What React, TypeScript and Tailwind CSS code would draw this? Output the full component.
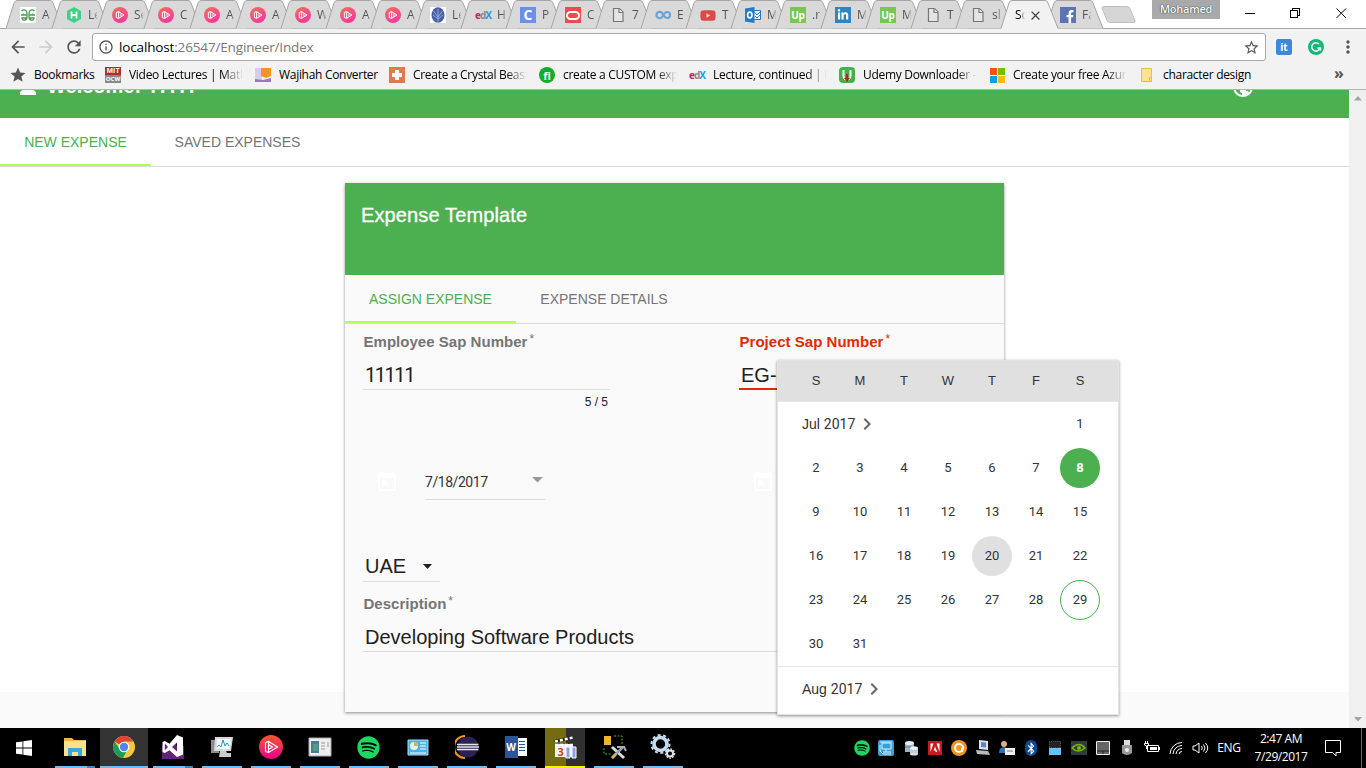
import React from 'react';
import { FaYoutube, FaSpotify, FaLinkedinIn, FaFacebookF, FaBluetoothB } from 'react-icons/fa';
import { MdRefresh, MdArrowBack, MdArrowForward, MdInfoOutline, MdStar, MdStarBorder, MdClose, MdMoreVert, MdPerson, MdPublic, MdToday, MdChevronRight } from 'react-icons/md';

const SEGOE = "font-['Open_Sans',sans-serif]";

/* ---------- favicons ---------- */

function PlayBadge() {
  return (
    <svg width="16" height="16" viewBox="0 0 24 24">
      <defs>
        <linearGradient id="pl" x1="0" y1="0" x2="0.5" y2="1">
          <stop offset="0" stopColor="#f0705a" />
          <stop offset="1" stopColor="#f23c9c" />
        </linearGradient>
      </defs>
      <circle cx="12" cy="12" r="12" fill="url(#pl)" />
      <path d="M10 7v10l8-5zM6.500 8v8M10 7L6.500 8M10 17l-3.500-1M13.500 9.500v5" fill="none" stroke="#fff" strokeWidth="1.500" />
    </svg>
  );
}

function Square({ className, children }: { className: string; children?: React.ReactNode }) {
  return <div className={`flex h-4 w-4 shrink-0 items-center justify-center overflow-hidden leading-none ${className}`}>{children}</div>;
}

function PageIcon() {
  return (
    <svg width="16" height="16" viewBox="0 0 16 16" fill="#e4e4e4" stroke="#777" strokeWidth="1.2">
      <path d="M3.500 1.500h6l3.500 3.500v9.500h-9.500z" />
      <path d="M9 1.500v4h4" />
    </svg>
  );
}

function Edx() {
  return (
    <div className="flex h-4 w-4 items-center justify-center font-['Open_Sans',sans-serif] text-[10px] font-bold leading-none tracking-[-1px]">
      <span className="text-[#b52a67]">e</span>
      <span className="text-[#888]">d</span>
      <span className="text-[#1e9be0]">X</span>
    </div>
  );
}

function Leaf() {
  return (
    <svg width="16" height="16" viewBox="0 0 16 16">
      <rect width="16" height="16" fill="#fff" />
      <g fill="none" stroke="#4a9c55" strokeWidth="1.300">
        <path d="M1.500 4c2-2 5.500-1 5.500 2v4c0 4-5 4-5 1h5M1 8h6M3 6.500c0 2 3 2 4 1" />
        <path d="M14.500 4c-2-2-5.500-1-5.500 2v4c0 4 5 4 5 1H9M15 8H9M13 6.500c0 2-3 2-4 1" />
      </g>
    </svg>
  );
}

function Hexagon() {
  return (
    <svg width="16" height="16" viewBox="0 0 16 16">
      <path d="M8 0l7 4v8l-7 4-7-4V4z" fill="#42cf85" />
      <path d="M5.500 4.500v7M10.500 4.500v7M5.500 8h5" stroke="#fff" strokeWidth="1.800" />
    </svg>
  );
}

function BlueTree() {
  return (
    <svg width="16" height="16" viewBox="0 0 16 16">
      <rect width="16" height="16" fill="#fff" />
      <ellipse cx="8" cy="8" rx="6.500" ry="7.700" fill="#4b5fa8" />
      <path d="M8 15V8M8 10L3.500 4M8 10l4.500-6M8 12L3 8M8 12l5-4M8 8V2" stroke="#9fc0e6" strokeWidth=".8" fill="none" />
    </svg>
  );
}

function Loops() {
  return (
    <svg width="16" height="16" viewBox="0 0 16 16" fill="none" stroke="#6aa3d6" strokeWidth="2.200">
      <path d="M7 10.200A3.200 3.200 0 1 1 7 5.800L9.500 9.500A3 3 0 1 0 9.500 6.500L7 10.200" />
    </svg>
  );
}

function Outlook() {
  return (
    <svg width="16" height="16" viewBox="0 0 16 16">
      <path d="M8 3.500h7.500v9H8z" fill="#fff" stroke="#1f78c4" />
      <path d="M9 5l3 3 3.500-3.500M10 9l2 2 3-3" stroke="#1f78c4" fill="none" />
      <path d="M0 1.500L9.500 0v16L0 14.500z" fill="#1f7cc8" />
      <ellipse cx="4.800" cy="8" rx="2.200" ry="2.900" fill="none" stroke="#fff" strokeWidth="1.600" />
    </svg>
  );
}

const up = <Square className="bg-[#78c751] text-[10px] font-bold text-white tracking-[-0.3px] font-['Open_Sans',sans-serif]">Up</Square>;

const tabs: { icon: React.ReactNode; text: string }[] = [
  { icon: <Leaf />, text: 'A' },
  { icon: <Hexagon />, text: 'Le' },
  { icon: <PlayBadge />, text: 'Se' },
  { icon: <PlayBadge />, text: 'C' },
  { icon: <PlayBadge />, text: 'A' },
  { icon: <PlayBadge />, text: 'A' },
  { icon: <PlayBadge />, text: 'W' },
  { icon: <PlayBadge />, text: 'A' },
  { icon: <PlayBadge />, text: 'A' },
  { icon: <BlueTree />, text: 'Le' },
  { icon: <Edx />, text: 'H' },
  { icon: <Square className="bg-[#6c8fe8] text-[14px] font-bold text-white">C</Square>, text: 'P' },
  {
    icon: (
      <Square className="bg-[#f0484c]">
        <div className="h-[9px] w-[14px] rounded-full border-2 border-white" />
      </Square>
    ),
    text: 'C',
  },
  { icon: <PageIcon />, text: '7' },
  { icon: <Loops />, text: 'E' },
  { icon: <FaYoutube size={17} color="#dc4a47" />, text: 'T' },
  { icon: <Outlook />, text: 'M' },
  { icon: up, text: '.r' },
  { icon: <Square className="bg-[#2f86bd] text-white"><FaLinkedinIn size={12} /></Square>, text: 'M' },
  { icon: up, text: 'M' },
  { icon: <PageIcon />, text: 'T' },
  { icon: <PageIcon />, text: 'sl' },
  { icon: null, text: 'Sc' },
  { icon: <Square className="items-end bg-[#5c75b0] pl-1 text-white"><FaFacebookF size={13} /></Square>, text: 'Fa' },
];

function Tab({ icon, text, wide }: { icon: React.ReactNode; text: string; wide: boolean }) {
  const active = icon === null;
  return (
    <div className={`relative h-[29px] shrink-0 ${wide ? 'w-[46px]' : 'w-[45px]'} ${active ? 'z-10' : ''}`}>
      <svg className="absolute left-0 top-0 overflow-visible" width="58" height="29" viewBox="0 0 58 29">
        <path
          d="M0 28.500L8 3Q9 .5 11 .5H44Q46 .5 47 3L57 28.500"
          fill={active ? '#f2f2f2' : '#d9d9d9'}
          stroke="#a6a6a6"
        />
        {active && <path d="M0.500 28.500H56.500" stroke="#f2f2f2" />}
      </svg>
      <div className="relative flex h-[29px] items-center pl-[14px] pt-[1px]">
        {active ? (
          <>
            <span className="w-[10px] overflow-hidden text-[12px] text-black [mask-image:linear-gradient(to_right,#000_50%,transparent)]">{text}</span>
            <MdClose className="ml-[3px] shrink-0" size={15} color="#444" />
          </>
        ) : (
          <>
            <span className="flex w-4 shrink-0">{icon}</span>
            <span className="ml-[6px] w-[9px] shrink-0 overflow-hidden whitespace-nowrap text-[12px] text-[#555] [mask-image:linear-gradient(to_right,#000_55%,rgba(0,0,0,0.3))]">{text}</span>
          </>
        )}
      </div>
    </div>
  );
}

function TabStrip() {
  return (
    <div className="relative flex h-[29px] w-full border-b border-[#a6a6a6] bg-white pl-[6px]">
      {tabs.map((t, i) => (
        <Tab key={i} wide={i < 5} {...t} />
      ))}
      <svg className="ml-[10px] mt-[6px] shrink-0" width="35" height="18" viewBox="0 0 35 18">
        <path d="M3 .5H26Q28 .5 29 2.500L34 15Q34.500 16.500 33 16.500H9Q7 16.500 6 14.500L1 2Q.5 .5 3 .5Z" fill="#d6d6d6" stroke="#c0c0c0" />
      </svg>
      <div className="ml-[16px] flex h-[19px] w-[68px] shrink-0 items-center justify-center bg-[#a9a9a9] text-[11px] font-semibold tracking-[-0.25px] text-white [text-shadow:0_0_1px_#333,0_0_1px_#333]">
        Mohamed
      </div>
      <svg className="absolute left-[1240px] top-[4px]" width="110" height="18" viewBox="0 0 110 18" fill="none" stroke="#000" shapeRendering="crispEdges">
        <path d="M5 9.500h10M50.500 6.500h7v7h-7zM52.500 6v-2h7v7h-2" />
        <path d="M96.500 4.500l9.500 9.500M106 4.500l-9.500 9.500" shapeRendering="auto" />
      </svg>
    </div>
  );
}

function Toolbar() {
  return (
    <div className="flex h-[36px] items-center">
      <MdArrowBack className="ml-[8px]" size={20} color="#555" />
      <MdArrowForward className="ml-[8px]" size={20} color="#ccc" />
      <MdRefresh className="ml-[8px]" size={20} color="#555" />
      <div className="ml-[8px] flex h-[28px] w-[1174px] items-center rounded-[3px] border border-[#a9a9a9] bg-white">
        <MdInfoOutline className="ml-[5px]" size={16} color="#555" />
        <span className="ml-[5px] flex-1 pt-px text-[13.500px] leading-none tracking-[-0.15px] text-[#777]">
          <span className="text-black">localhost</span>:26547/Engineer/Index
        </span>
        <MdStarBorder className="mr-[5px]" size={17} color="#555" />
      </div>
      <Square className="ml-[10px] rounded-[2px] bg-[#3d88d8] text-[10px] font-bold text-white">it</Square>
      <svg className="ml-[16px]" width="16" height="16" viewBox="0 0 16 16">
        <circle cx="8" cy="8" r="8" fill="#15b876" />
        <path d="M11 5a4.200 4.200 0 1 0 1 4H9.500M12.500 8.500v3" fill="none" stroke="#fff" strokeWidth="1.500" />
      </svg>
      <MdMoreVert className="ml-[14px]" size={20} color="#555" />
    </div>
  );
}

function Bookmark({ w, icon, text, fade }: { w: string; icon: React.ReactNode; text: string; fade?: boolean }) {
  return (
    <div className={`flex h-full shrink-0 items-center ${w}`}>
      <span className="flex w-4 shrink-0 justify-center">{icon}</span>
      <span
        className={`ml-[8px] overflow-hidden whitespace-nowrap text-[12px] tracking-[-0.3px] text-black ${
          fade ? 'w-[114px] [mask-image:linear-gradient(to_right,#000_82%,transparent)]' : ''
        }`}
      >
        {text}
      </span>
    </div>
  );
}

function Bookmarks() {
  return (
    <div className="flex h-[25px] items-center border-b border-[#b3b3b3] pb-[4px] pl-[10px]">
      <Bookmark w="w-[95px]" icon={<MdStar size={18} color="#555" className="shrink-0" />} text="Bookmarks" />
      <Bookmark
        w="w-[150px]"
        fade
        text="Video Lectures | Mathe"
        icon={
          <span className="flex h-4 w-4 flex-col overflow-hidden text-center text-[7px] font-bold leading-[8px] text-white">
            <span className="bg-[#b02a30]">MIT</span>
            <span className="bg-[#888] text-[6px]">OCW</span>
          </span>
        }
      />
      <Bookmark
        w="w-[134px]"
        text="Wajihah Converter"
        icon={
          <svg width="16" height="16" viewBox="0 0 16 16">
            <path d="M0 1h7v14H0z" fill="#d9cde6" />
            <path d="M6 1h10v8l-5 2-5-2z" fill="#f7941d" />
            <path d="M0 12l8 1 8-2v4H0z" fill="#9c7ab8" />
          </svg>
        }
      />
      <Bookmark
        w="w-[150px]"
        fade
        text="Create a Crystal Beast"
        icon={
          <Square className="bg-[#e2784c]">
            <svg width="10" height="10" viewBox="0 0 10 10">
              <path d="M3 0h4v3h3v4H7v3H3V7H0V3h3z" fill="#fff" />
            </svg>
          </Square>
        }
      />
      <Bookmark w="w-[150px]" fade text="create a CUSTOM expe" icon={<Square className="rounded-full bg-[#12ad2b] text-[11px] font-bold text-white">fi</Square>} />
      <Bookmark w="w-[150px]" fade text="Lecture, continued | Le" icon={<Edx />} />
      <Bookmark
        w="w-[150px]"
        fade
        text="Udemy Downloader - "
        icon={
          <svg width="16" height="16" viewBox="0 0 16 16">
            <rect width="16" height="16" rx="4" fill="#45b04a" />
            <path d="M4.500 3v6a3.500 3.500 0 0 0 7 0V3" fill="none" stroke="#fff" strokeWidth="2" />
            <path d="M7 7h2v4h2l-3 4-3-4h2z" fill="#b3241c" />
          </svg>
        }
      />
      <Bookmark
        w="w-[150px]"
        fade
        text="Create your free Azure"
        icon={
          <span className="grid grid-cols-2 gap-[1px]">
            <i className="h-[7px] w-[7px] bg-[#f65314]" />
            <i className="h-[7px] w-[7px] bg-[#7cbb00]" />
            <i className="h-[7px] w-[7px] bg-[#00a1f1]" />
            <i className="h-[7px] w-[7px] bg-[#ffbb00]" />
          </span>
        }
      />
      <Bookmark
        w="w-[195px]"
        text="character design"
        icon={
          <svg width="16" height="16" viewBox="0 0 16 16" fill="#fde293" stroke="#e8be4a">
            <path d="M2.500 1.500h10v13h-10zM10.500 10.500h2v4h-2z" />
          </svg>
        }
      />
      <span className="-mt-[4px] text-[16px] font-bold leading-none text-[#555]">»</span>
    </div>
  );
}

/* ---------- page ---------- */

const DIGITS = "font-[Roboto,sans-serif]";

function FieldLabel({ children, error }: { children: string; error?: boolean }) {
  return (
    <div className={`-mt-px flex h-[20px] items-center pl-[0.500px] text-[15px] font-bold leading-none tracking-[0.03px] ${error ? 'text-[#dd2c00]' : 'text-[#757575]'}`}>
      {children}
      <span className="ml-[2px] self-start pt-[2px] text-[12px] font-normal">*</span>
    </div>
  );
}

const DAYS = ['S', 'M', 'T', 'W', 'T', 'F', 'S'];

function MonthName({ month, year }: { month: string; year: string }) {
  return (
    <div className="flex items-center text-[14px] leading-none text-[#333]">
      <span>
        {month} <span className={DIGITS}>{year}</span>
      </span>
      <MdChevronRight size={24} color="#666" />
    </div>
  );
}

function Calendar() {
  const dates = Array.from({ length: 30 }, (_, i) => i + 2);
  return (
    <div className="absolute left-[777px] top-[270px] h-[355px] w-[342px] border border-[#e4e4e4] bg-white text-[13px] text-[#333] shadow-[0_1px_3px_rgba(0,0,0,0.4)]">
      <div className="grid h-[41px] grid-cols-[repeat(7,44px)] items-center border-b border-[#e8e8e8] bg-[#e0e0e0] pl-4 text-center">
        {DAYS.map((d, i) => (
          <span key={i} className="pb-[1px]">{d}</span>
        ))}
      </div>
      <div className="grid h-[265px] grid-cols-[repeat(7,44px)] grid-rows-[repeat(6,44px)] border-b border-[#e8e8e8] pl-4">
        <div className="col-span-6 flex items-center pl-[8px]">
          <MonthName month="Jul" year="2017" />
        </div>
        <div className={`flex items-center justify-center ${DIGITS}`}>1</div>
        {dates.map((d) => (
          <div key={d} className={`flex items-center justify-center ${DIGITS}`}>
            <span
              className={`flex h-[40px] w-[40px] items-center justify-center rounded-full ${
                d === 8 ? 'bg-[#4caf50] font-bold text-white' : d === 20 ? 'bg-[#e0e0e0]' : d === 29 ? 'border border-[#4caf50]' : ''
              }`}
            >
              {d}
            </span>
          </div>
        ))}
      </div>
      <div className="flex h-[44px] items-center pl-[24px]">
        <MonthName month="Aug" year="2017" />
      </div>
    </div>
  );
}

function Card() {
  return (
    <div className="ml-[345px] mt-[16px] h-[529px] w-[659px] bg-[#fafafa] shadow-[0_1px_3px_rgba(0,0,0,0.45)]">
      <div className="h-[92px] bg-[#4caf50] px-4 pt-[20px] text-[20px] leading-[24px] tracking-[0.13px] text-white [-webkit-text-stroke:0.3px_#fff]">Expense Template</div>
      <div className="flex h-[49px] border-b border-[#dcdcdc] text-[14px]">
        <div className="flex w-[171px] items-center justify-center border-b-2 border-[#b2ff59] pt-[2px] text-[#4caf50]">ASSIGN EXPENSE</div>
        <div className="flex w-[176px] items-center justify-center text-[#757575]">EXPENSE DETAILS</div>
      </div>
      <div className="flex pl-[18px] pt-[8px]">
        <div className="w-[376px]">
          <FieldLabel>Employee Sap Number</FieldLabel>
          <div className={`mt-[9px] flex h-[30px] w-[247px] items-center border-b border-[#dcdcdc] pl-[2px] text-[20px] tracking-[-1.450px] text-[#212121] ${DIGITS}`}>11111</div>
          <div className="mt-[5px] w-[245px] text-right text-[12px] leading-[14px] text-[#212121]">5 / 5</div>
        </div>
        <div className="w-[247px]">
          <FieldLabel error>Project Sap Number</FieldLabel>
          <div className="mt-[9px] flex h-[30px] items-center border-b-2 border-[#dd2c00] pl-[2px] pt-[2px] text-[20px] text-[#212121]">EG-</div>
        </div>
      </div>
      <div className="flex pl-[18px] pt-[56px]">
        <div className="flex w-[376px] items-start pl-[12px]">
          <MdToday size={24} color="#fff" className="mt-[5px]" />
          <div className="ml-[26px] flex h-[35px] w-[120px] items-center justify-between border-b border-[#dcdcdc] text-[14px] text-[#333]">
            <span className={`${DIGITS} tracking-[-0.45px]`}>7/18/2017</span>
            <svg width="16" height="8" viewBox="0 0 16 8" className="mb-[4px]">
              <path d="M3 1h11l-5.500 5.500z" fill="#999" />
            </svg>
          </div>
        </div>
        <MdToday size={24} color="#fff" className="ml-[12px] mt-[5px]" />
      </div>
      <div className="ml-[18px] mt-[50px] flex h-[32px] w-[77px] items-center justify-between border-b border-[#dcdcdc] pl-[2px] pt-px text-[20px] text-[#212121]">
        UAE
        <svg width="9" height="5" viewBox="0 0 9 5" className="mr-[8px]">
          <path d="M0 0h9L4.500 5z" fill="#212121" />
        </svg>
      </div>
      <div className="pl-[18px] pt-[12px]">
        <FieldLabel>Description</FieldLabel>
        <div className="mt-[9px] flex h-[30px] w-[623px] items-center border-b border-[#dcdcdc] pl-[2px] text-[20px] text-[#212121]">Developing Software Products</div>
      </div>
    </div>
  );
}

function Page() {
  return (
    <div className="relative flex h-[638px] overflow-hidden bg-[#fafafa] font-['Liberation_Sans',Arial,sans-serif]">
      <div className="h-[602px] w-[1349px] bg-white">
        <div className="flex h-[28px] items-start bg-[#4caf50] text-white">
          <MdPerson size={24} className="-mt-[15px] ml-[16px]" />
          <span className="-mt-[15px] ml-[7px] flex-1 text-[20px] font-bold leading-[22px]">
            Welcome! <span className={`${DIGITS} tracking-[-1.800px]`}>11111</span>
          </span>
          <MdPublic size={24} className="-mt-[15px] mr-[94px]" />
        </div>
        <div className="flex h-[49px] border-b border-[#dcdcdc] text-[14px]">
          <div className="flex w-[151px] items-center justify-center border-b-2 border-[#b2ff59] pt-[2px] text-[#4caf50]">NEW EXPENSE</div>
          <div className="flex w-[173px] items-center justify-center text-[#757575]">SAVED EXPENSES</div>
        </div>
        <Card />
      </div>
      <div className="flex h-full w-[17px] flex-col items-center justify-between bg-[#f0f0f0] py-[6px]">
        <svg width="8" height="5" viewBox="0 0 8 5"><path d="M0 4.500L4 0l4 4.500z" fill="#a3a3a3" /></svg>
        <svg width="8" height="5" viewBox="0 0 8 5"><path d="M0 0h8L4 4.500z" fill="#a3a3a3" /></svg>
      </div>
      <Calendar />
    </div>
  );
}

/* ---------- taskbar ---------- */

const STACKED = 'bg-[linear-gradient(to_right,#76b9ed_80%,#4f7fa6_80%)]';

const apps: { icon: React.ReactNode; cell?: string; bar?: string }[] = [
  {
    bar: STACKED,
    icon: (
      <svg width="24" height="24" viewBox="0 0 24 24">
        <path d="M1 3h8l2 2h12v16H1z" fill="#e9b94c" />
        <path d="M1 6h22v15H1z" fill="#fde08a" />
        <path d="M5 21v-8h14v8h-4v-4H9v4z" fill="#38a9e0" />
      </svg>
    ),
  },
  {
    cell: 'bg-[#333] ml-px !w-[48px]',
    icon: (
      <svg width="24" height="24" viewBox="0 0 24 24">
        <circle cx="12" cy="12" r="11" fill="#f8c93e" />
        <path d="M12 12L2.500 6.500A11 11 0 0 1 21.500 6.500H12z" fill="#dc4437" />
        <path d="M2.500 6.500A11 11 0 0 0 11 23l4.500-8.500L12 12 7 13z" fill="#1c9c58" />
        <circle cx="12" cy="12" r="5.300" fill="#fff" />
        <circle cx="12" cy="12" r="4.200" fill="#4a88ee" />
      </svg>
    ),
  },
  {
    bar: STACKED,
    icon: (
      <svg width="24" height="24" viewBox="0 0 24 24">
        <path d="M1 11h22v13H1z" fill="#68217a" />
        <path d="M3 8.500v7l3.500-3.500zM15.500 7.500v9L10 12z" fill="#68217a" />
        <path fillRule="evenodd" d="M16 0l6 2.500v17L16 22l-7.500-6.800L3.800 18 1.500 17V7l2.300-1 4.700 2.800zM16 7.500L11 12l5 4.500zM3.800 8.800v6.400L7 12z" fill="#fff" />
      </svg>
    ),
  },
  {
    icon: (
      <svg width="24" height="24" viewBox="0 0 24 24">
        <path d="M1 5h8v13H1z" fill="#8d8d8d" />
        <path d="M5 2h18l-2 14H4z" fill="#d8d8d8" />
        <path d="M7 4h14l-1.500 10H6.500z" fill="#f2fafd" />
        <path d="M7 12l2-2 2 2 2-7 2 6 2-3 2 3" fill="none" stroke="#2996c9" />
        <path d="M10 16h6l1 2h4v4H9z" fill="#ccc" />
      </svg>
    ),
  },
  {
    icon: (
      <svg width="24" height="24" viewBox="0 0 24 24">
        <defs>
          <linearGradient id="ps" x1="0" y1="0" x2="0" y2="1">
            <stop offset="0" stopColor="#f15a2c" />
            <stop offset="1" stopColor="#ec008c" />
          </linearGradient>
        </defs>
        <circle cx="12" cy="12" r="12" fill="url(#ps)" />
        <path d="M9.500 6.500v11l9-5.500zM6.500 7.500v9M6.500 7.500l3-1M6.500 16.500l3 1M9.500 9.500l4 2.500-4 2.500" fill="none" stroke="#fff" strokeWidth="1.200" />
      </svg>
    ),
  },
  {
    icon: (
      <svg width="24" height="24" viewBox="0 0 24 24">
        <path d="M1 3h22v18H1z" fill="#eee" stroke="#aaa" />
        <path d="M3 6h8v12H3z" fill="#4c7c9c" />
        <path d="M5 9h5v7H5z" fill="#4fa071" />
        <path d="M13 8h4M13 11h4M13 14h4M20 7v5" stroke="#999" />
      </svg>
    ),
  },
  { icon: <FaSpotify size={23} color="#1ed760" /> },
  {
    icon: (
      <svg width="24" height="24" viewBox="0 0 24 24">
        <path d="M2 5h20v15H2z" fill="#4eb2e8" stroke="#b3ddf3" />
        <circle cx="8" cy="11" r="4" fill="#dff2fc" />
        <path d="M8 11V7a4 4 0 0 1 4 4z" fill="#f0a83c" />
        <path d="M14 8h6M14 11h6M14 14h6M4 18h16" stroke="#fff" />
      </svg>
    ),
  },
  {
    icon: (
      <svg width="24" height="24" viewBox="0 0 24 24">
        <path d="M10 1a11 11 0 0 0 0 22" fill="none" stroke="#f7941e" strokeWidth="2" />
        <circle cx="13" cy="12" r="10.500" fill="#2c2255" />
        <path d="M2 9.500h21.500M2 12h22M2 14.500h21.500" stroke="#e8e6ef" strokeWidth="1.500" />
      </svg>
    ),
  },
  {
    icon: (
      <div className="flex h-[22px] w-[22px] items-center">
        <div className="flex h-[22px] w-[13px] items-center justify-center bg-[#2b579a] text-[10px] font-bold text-white">W</div>
        <svg width="9" height="18" viewBox="0 0 9 18"><path d="M0 0h9v18H0z" fill="#fff" /><path d="M1 3.500h6M1 6.500h6M1 9.500h6M1 12.500h6" stroke="#2b579a" /></svg>
      </div>
    ),
  },
  {
    cell: 'bg-[linear-gradient(to_right,#736c12_53%,#303030_53%)] !w-[40px] mx-[4.500px]',
    bar: 'bg-[#fff100]',
    icon: (
      <div className="relative">
        <svg width="24" height="24" viewBox="0 0 24 24">
          <path d="M2 9h18v13H2z" fill="#f2f2f2" />
          <path d="M1 5l18-4v3L2 8z" fill="#222" />
          <path d="M2 6.500l18-4M2 10h18" stroke="#fff" strokeWidth="2.500" strokeDasharray="3 2" />
          <path d="M13 12h4v11h-4zM19 12h4v11h-4z" fill="#86a4e4" stroke="#fff" />
        </svg>
        <span className="absolute left-[5px] top-[11px] text-[11px] font-bold leading-none text-[#d1401d]">3</span>
      </div>
    ),
  },
  {
    icon: (
      <svg width="26" height="26" viewBox="0 0 26 26">
        <path d="M3 2h7v9H3z" fill="#eab62f" />
        <path d="M13 2h8v8M3 14v6h8" fill="none" stroke="#3fae3a" strokeDasharray="2 1.500" />
        <path d="M11 13l12 11" stroke="#ddd" strokeWidth="3" />
        <path d="M11 24l11-11" stroke="#8fa5b5" strokeWidth="2.500" />
        <path d="M11 24l4-4" stroke="#e9b23f" strokeWidth="2.500" />
        <path d="M16 13h7l2 4" stroke="#aab" strokeWidth="2" fill="none" />
      </svg>
    ),
  },
  {
    icon: (
      <svg width="26" height="26" viewBox="0 0 26 26" fill="none">
        <circle cx="10.500" cy="10" r="6.500" stroke="#c4dced" strokeWidth="3.600" />
        <circle cx="10.500" cy="10" r="9" stroke="#c4dced" strokeWidth="2" strokeDasharray="3 2.600" />
        <circle cx="20" cy="19.500" r="3" stroke="#dfe6ea" strokeWidth="2" />
        <circle cx="20" cy="19.500" r="4.500" stroke="#dfe6ea" strokeWidth="1.500" strokeDasharray="1.700 1.300" />
      </svg>
    ),
  },
];

const tray: React.ReactNode[] = [
  <FaSpotify size={16} color="#1ed760" />,
  <svg width="16" height="16" viewBox="0 0 16 16"><rect width="16" height="16" rx="2" fill="#3aa0dc" /><path d="M4 3h9v6H4zM5 12h8M8 9v3M2 5v6l3 3h8M2 2h12" fill="none" stroke="#d9efff" /></svg>,
  <svg width="16" height="16" viewBox="0 0 16 16"><path d="M2 3h9v9H2z" fill="#9db4c4" /><ellipse cx="6.500" cy="3" rx="4.500" ry="2" fill="#e3edf3" /><path d="M7 8h8v6H7z" fill="#b9ccd8" /><ellipse cx="11" cy="8" rx="4" ry="1.800" fill="#eef4f8" /><ellipse cx="11" cy="14" rx="4" ry="1.500" fill="#d5e2ea" /><path d="M2 7h6" stroke="#5c7b90" /></svg>,
  <svg width="14" height="14" viewBox="0 0 14 14"><path d="M0 0h14v14H0z" fill="#c8191f" /><path d="M2.500 2.500h3L2.500 11zM11.500 2.500h-3l3 8.500zM7 5.500L9.300 11H7.800L7.200 9.500H5.500z" fill="#fff" /></svg>,
  <svg width="16" height="16" viewBox="0 0 16 16"><circle cx="8" cy="8" r="8" fill="#f7941e" /><circle cx="8" cy="8" r="4" fill="none" stroke="#fff" strokeWidth="2" /><path d="M11 8v4" stroke="#fff" strokeWidth="2" /></svg>,
  <svg width="16" height="16" viewBox="0 0 16 16"><path d="M4 0l9 1v9l-9-1z" fill="#dfe5ea" /><path d="M6 2l5 .6v5L6 7z" fill="#5e86bd" /><path d="M1 10l12 1 2 4-13-1z" fill="#bbb" /></svg>,
  <svg width="16" height="16" viewBox="0 0 16 16"><circle cx="5" cy="4" r="3" fill="#dfae7a" /><path d="M0 13q0-6 5-6t4 6z" fill="#2f6fb5" /><path d="M6 8h10v7H6z" fill="#eef2f5" /><path d="M8 11h6" stroke="#6b7c9c" /></svg>,
  <span className="flex h-4 w-[12px] items-center justify-center rounded-full bg-[#0b4a91]"><FaBluetoothB size={13} color="#fff" /></span>,
  <svg width="12" height="14" viewBox="0 0 12 14"><path d="M0 0h12v7H0z" fill="#222" stroke="#777" strokeDasharray="1 1" /><path d="M0 7h12v7H0z" fill="#67c2f3" /></svg>,
  <svg width="16" height="14" viewBox="0 0 16 14"><path d="M0 0h16v14H0z" fill="#303c3c" /><path d="M1 7q7-7 13 0-7 6-13 0z" fill="none" stroke="#76b900" strokeWidth="1.500" /><circle cx="8" cy="7" r="2" fill="#76b900" /></svg>,
  <svg width="14" height="14" viewBox="0 0 14 14"><path d="M.5.5h13v13H.5z" fill="#666" stroke="#eee" /><path d="M1 10h12M7 10v3" stroke="#222" /></svg>,
  <svg width="12" height="16" viewBox="0 0 12 16"><path d="M3 0h6v5H3z" fill="#ddd" /><path d="M1 5h10v8q-5 4-10 0z" fill="#999" /><circle cx="6" cy="10" r="2" fill="#eee" /></svg>,
  <svg width="16" height="14" viewBox="0 0 16 14"><path d="M3.500 4.500h11v6h-11zM15.500 6v3" fill="none" stroke="#fff" /><path d="M6 6h7v3H6z" fill="#fff" /><path d="M.5 2.500h4v1.500q-2 2-4 0zM1.500 0v2M3.500 0v2M2.500 5v3" fill="none" stroke="#fff" /></svg>,
  <svg width="15" height="14" viewBox="0 0 15 14" fill="none" stroke="#fff"><path d="M1 13A12 12 0 0 1 13 1.500M4 13a9 9 0 0 1 9-8.500M7 13a6 6 0 0 1 6-5.500M10 13a3 3 0 0 1 3-2.500" /></svg>,
  <svg width="17" height="14" viewBox="0 0 17 14" fill="none" stroke="#fff"><path d="M1 5v4h2l4 3V2L3 5zM9.500 5q1.500 2 0 4M11.500 3.500q3 3.500 0 7M13.500 2q4.500 5 0 10" /></svg>,
];

function Taskbar() {
  return (
    <div className="relative flex h-[40px] bg-black text-white">
      <div className="flex w-[50px] shrink-0 items-center pl-[16px]">
        <svg width="16" height="16" viewBox="0 0 16 16" fill="#fff"><path d="M0 2.300l6.500-.9v6.100H0zM7.300 1.300L16 0v7.500H7.300zM0 8.400h6.500v6.100L0 13.700zM7.300 8.400H16V16l-8.700-1.300z" /></svg>
      </div>
      {apps.map((a, i) => (
        <div key={i} className={`flex h-[40px] w-[49px] shrink-0 flex-col items-center ${a.cell ?? ''}`}>
          <div className="flex h-[38px] items-center">{a.icon}</div>
          <div className={`h-[2px] ${i === 1 ? 'w-full' : 'w-[40px]'} ${a.bar ?? 'bg-[#76b9ed]'}`} />
        </div>
      ))}
      <div className="ml-auto flex h-[40px] items-center">
        {tray.map((t, i) => (
          <span key={i} className={`flex justify-center ${i === 2 || i === 12 ? 'w-[25px]' : 'w-[24px]'}`}>{t}</span>
        ))}
        <span className="ml-[1px] w-[32px] text-center text-[12px] tracking-[-0.3px]">ENG</span>
        <div className="w-[72px] text-center text-[12px] leading-[18px] tracking-[-0.450px]">
          <div>2:47 AM</div>
          <div>7/29/2017</div>
        </div>
        <svg className="ml-[8px] mr-[25px]" width="16" height="17" viewBox="0 0 16 17"><path d="M.5.500h15v12h-4.500v3.500l-3.500-3.500H.5z" fill="none" stroke="#fff" /></svg>
      </div>
      <div className="absolute right-[4px] top-0 h-full w-px bg-[#666]" />
    </div>
  );
}

export default function App() {
  return (
    <div className={`h-[768px] w-[1366px] overflow-hidden bg-[#f2f2f2] ${SEGOE}`}>
      <TabStrip />
      <Toolbar />
      <Bookmarks />
      <Page />
      <Taskbar />
    </div>
  );
}
